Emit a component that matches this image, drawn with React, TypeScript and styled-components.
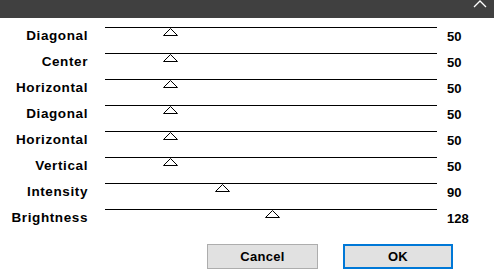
import React from "react";
import styled, { createGlobalStyle } from "styled-components";

const Global = createGlobalStyle`
  html, body { margin: 0; padding: 0; background: #ffffff; }
  body { font-family: "Liberation Sans", Arial, sans-serif; width: 494px; height: 278px; overflow: hidden; }
`;

const Window = styled.div`
  width: 494px;
  height: 278px;
  display: flex;
  flex-direction: column;
  background: #ffffff;
`;

const TitleBar = styled.div`
  height: 18px;
  background: #404040;
  display: flex;
  justify-content: flex-end;
  align-items: flex-start;
  padding-right: 7px;
`;

const Rows = styled.div`
  display: flex;
  flex-direction: column;
  padding-top: 9px;
`;

const Row = styled.div`
  display: grid;
  grid-template-columns: 88px 332px 1fr;
  column-gap: 17px;
  height: 26px;
  align-items: start;
`;

const Label = styled.div`
  text-align: right;
  font-size: 13.5px;
  font-weight: bold;
  letter-spacing: 0.6px;
  color: #000;
  line-height: 14px;
  padding-top: 2px;
  white-space: nowrap;
`;

const Track = styled.div`
  position: relative;
  height: 25px;
  border-top: 1px solid #000;
`;

const Thumb = styled.svg`
  position: absolute;
  top: 0;
  width: 15px;
  height: 9px;
`;

const Value = styled.div`
  font-size: 13px;
  font-weight: bold;
  color: #000;
  line-height: 14px;
  padding-top: 3px;
  margin-left: -7px;
`;

const Buttons = styled.div`
  display: flex;
  gap: 25px;
  padding-left: 207px;
  margin-top: 9px;
`;

const Button = styled.button<{ $primary?: boolean }>`
  width: ${(p) => (p.$primary ? "110px" : "111px")};
  height: 25px;
  box-sizing: border-box;
  background: #e1e1e1;
  border: ${(p) => (p.$primary ? "2px solid #0078d7" : "1px solid #adadad")};
  font-family: "Liberation Sans", Arial, sans-serif;
  font-size: 13px;
  font-weight: bold;
  letter-spacing: 0.3px;
  color: #000;
  padding: 0;
  display: flex;
  align-items: center;
  justify-content: center;
`;

const rows: [string, number][] = [
  ["Diagonal", 50],
  ["Center", 50],
  ["Horizontal", 50],
  ["Diagonal", 50],
  ["Horizontal", 50],
  ["Vertical", 50],
  ["Intensity", 90],
  ["Brightness", 128],
];

export default function App() {
  return (
    <Window>
      <Global />
      <TitleBar>
        <svg width="14" height="8" viewBox="0 0 14 8">
          <polyline points="1,7 7,1 13,7" fill="none" stroke="#ffffff" strokeWidth="1.3" />
        </svg>
      </TitleBar>
      <Rows>
        {rows.map(([label, v], i) => (
          <Row key={i}>
            <Label>{label}</Label>
            <Track>
              <Thumb
                viewBox="0 0 15 9"
                style={{ left: `${Math.round((v / 255) * 332) - 7}px` }}
              >
                <polygon points="7.5,0.5 14.5,7.5 0.5,7.5" fill="#fff" stroke="#000" strokeWidth="1" />
              </Thumb>
            </Track>
            <Value>{v}</Value>
          </Row>
        ))}
      </Rows>
      <Buttons>
        <Button>Cancel</Button>
        <Button $primary>OK</Button>
      </Buttons>
    </Window>
  );
}
